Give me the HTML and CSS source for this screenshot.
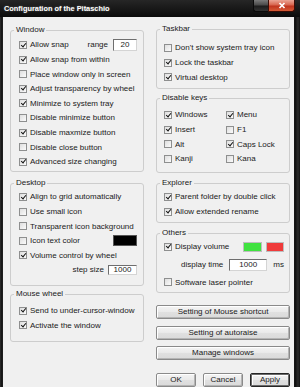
FILE: index.html
```html
<!DOCTYPE html>
<html>
<head>
<meta charset="utf-8">
<link rel="stylesheet" href="styles.css">
</head>
<body>
<div class="window">
  <div class="titlebar">
    <span class="title">Configuration of the Pitaschio</span>
    <div class="capbtns">
      <span class="cap-min"></span>
      <span class="cap-close"><svg width="8" height="7" viewBox="0 0 8 7"><path d="M1.5 1 L6.5 6 M6.5 1 L1.5 6" stroke="#fff" stroke-width="1.7" fill="none"/></svg></span>
    </div>
  </div>
  <div class="client">
    <div class="col">
      <section class="group g-window">
        <div class="legend">Window</div>
        <div class="rows">
          <div class="row"><span class="cb on"></span><span>Allow snap</span><span class="push">range</span><span class="field f-range">20</span></div>
          <div class="row"><span class="cb on"></span><span>Allow snap from within</span></div>
          <div class="row"><span class="cb"></span><span>Place window only in screen</span></div>
          <div class="row"><span class="cb on"></span><span>Adjust transparency by wheel</span></div>
          <div class="row"><span class="cb on"></span><span>Minimize to system tray</span></div>
          <div class="row"><span class="cb"></span><span>Disable minimize button</span></div>
          <div class="row"><span class="cb on"></span><span>Disable maxmize button</span></div>
          <div class="row"><span class="cb"></span><span>Disable close button</span></div>
          <div class="row"><span class="cb on"></span><span>Advanced size changing</span></div>
        </div>
      </section>
      <section class="group g-desktop">
        <div class="legend">Desktop</div>
        <div class="rows">
          <div class="row"><span class="cb on"></span><span>Align to grid automatically</span></div>
          <div class="row"><span class="cb"></span><span>Use small icon</span></div>
          <div class="row"><span class="cb"></span><span>Transparent icon background</span></div>
          <div class="row"><span class="cb"></span><span>Icon text color</span><span class="swatch sw-black"></span></div>
          <div class="row"><span class="cb on"></span><span>Volume control by wheel</span></div>
          <div class="row row-end"><span>step size</span><span class="field f-step">1000</span></div>
        </div>
      </section>
      <section class="group g-mouse">
        <div class="legend">Mouse wheel</div>
        <div class="rows">
          <div class="row"><span class="cb on"></span><span>Send to under-cursor-window</span></div>
          <div class="row"><span class="cb on"></span><span>Activate the window</span></div>
        </div>
      </section>
    </div>
    <div class="col">
      <section class="group g-taskbar">
        <div class="legend">Taskbar</div>
        <div class="rows">
          <div class="row"><span class="cb"></span><span>Don't show system tray icon</span></div>
          <div class="row"><span class="cb on"></span><span>Lock the taskbar</span></div>
          <div class="row"><span class="cb on"></span><span>Virtual desktop</span></div>
        </div>
      </section>
      <section class="group g-keys">
        <div class="legend">Disable keys</div>
        <div class="rows keys">
          <div class="row"><span class="cb on"></span><span>Windows</span></div>
          <div class="row"><span class="cb on"></span><span>Menu</span></div>
          <div class="row"><span class="cb on"></span><span>Insert</span></div>
          <div class="row"><span class="cb"></span><span>F1</span></div>
          <div class="row"><span class="cb"></span><span>Alt</span></div>
          <div class="row"><span class="cb on"></span><span>Caps Lock</span></div>
          <div class="row"><span class="cb"></span><span>Kanji</span></div>
          <div class="row"><span class="cb"></span><span>Kana</span></div>
        </div>
      </section>
      <section class="group g-explorer">
        <div class="legend">Explorer</div>
        <div class="rows">
          <div class="row"><span class="cb on"></span><span>Parent folder by double click</span></div>
          <div class="row"><span class="cb on"></span><span>Allow extended rename</span></div>
        </div>
      </section>
      <section class="group g-others">
        <div class="legend">Others</div>
        <div class="rows">
          <div class="row"><span class="cb on"></span><span>Display volume</span><span class="swatch sw-green"></span><span class="swatch sw-red"></span></div>
          <div class="row row-time"><span>display time</span><span class="field f-time">1000</span><span class="ms">ms</span></div>
          <div class="row"><span class="cb"></span><span>Software laser pointer</span></div>
        </div>
      </section>
      <div class="btn btn-wide b1">Setting of Mouse shortcut</div>
      <div class="btn btn-wide b2">Setting of autoraise</div>
      <div class="btn btn-wide b3">Manage windows</div>
      <div class="btnrow">
        <div class="btn">OK</div>
        <div class="btn">Cancel</div>
        <div class="btn btn-default">Apply</div>
      </div>
    </div>
  </div>
</div>
</body>
</html>
```

FILE: styles.css
```css
* { box-sizing: border-box; }
html, body { margin: 0; padding: 0; }
body {
  width: 300px;
  height: 387px;
  overflow: hidden;
  font-family: "Liberation Sans", Arial, sans-serif;
  font-size: 8px;
  color: #1a1a1a;
  background: #161616;
}
.window {
  width: 300px;
  height: 387px;
  display: flex;
  flex-direction: column;
  background: linear-gradient(90deg, #3c3c3c 0, #101010 1px, #1d1d1d 2px, #1d1d1d 294px, #0c0c0c 295px, #2a2a2a 298px, #111 300px);
}
.titlebar {
  height: 17px;
  flex: none;
  display: flex;
  align-items: flex-start;
  background: linear-gradient(#262626, #0b0b0b);
}
.title {
  padding-left: 4px;
  line-height: 18px;
  color: #fff;
  font-weight: bold;
  font-size: 7.4px;
  text-shadow: 0 0 2px rgba(255,255,255,0.35);
}
.capbtns {
  margin-left: auto;
  margin-right: 5px;
  display: flex;
  height: 12px;
}
.cap-min {
  width: 15px;
  height: 12px;
  border: 1px solid #0a0a0a;
  border-top: 0;
  border-right: 0;
  border-radius: 0 0 0 3px;
  background: linear-gradient(#7a7a7a, #4a4a4a 45%, #1c1c1c 55%, #333);
}
.cap-close {
  width: 27px;
  height: 12px;
  border: 1px solid #3a0d06;
  border-top: 0;
  border-radius: 0 0 3px 0;
  background: linear-gradient(#eba595, #d8664f 45%, #c0341e 55%, #d65a36);
  display: flex;
  align-items: center;
  justify-content: center;
}
.client {
  flex: 1;
  margin: 0 6px 0 3px;
  background: #f0f0f0;
  display: grid;
  grid-template-columns: 134px 134px;
  column-gap: 12px;
  align-items: start;
  padding: 7px 0 0 7px;
}
.col { display: flex; flex-direction: column; }
.group {
  border: 1px solid #cdcdcd;
  border-radius: 3px;
}
.legend {
  width: fit-content;
  height: 10px;
  line-height: 10px;
  margin: -6px 0 0 3px;
  padding: 0 2px;
  background: #f0f0f0;
  color: #1a1a1a;
}
.rows { display: flex; flex-direction: column; }
.row {
  height: 14.6px;
  display: flex;
  align-items: center;
  white-space: nowrap;
}
.cb {
  width: 8px;
  height: 8px;
  flex: none;
  border: 1px solid #8e8f8f;
  background: linear-gradient(135deg, #dedede, #fbfbfb);
  margin-right: 3px;
  position: relative;
}
.cb.on::after {
  content: "";
  position: absolute;
  left: 1.6px;
  top: -0.4px;
  width: 2px;
  height: 4.2px;
  border: solid #111;
  border-width: 0 1.6px 1.6px 0;
  transform: rotate(40deg);
}
.push { margin-left: auto; }
.field {
  background: #fff;
  border: 1px solid;
  border-color: #6e6e6e #d4d4d4 #d4d4d4 #6e6e6e;
  text-align: center;
  flex: none;
}
.f-range { width: 24px; height: 12px; line-height: 10px; margin-left: 5px; }
.f-step { width: 29px; height: 10px; line-height: 8px; margin-left: 4px; }
.f-time { width: 38px; height: 12px; line-height: 10px; margin-left: 6px; }
.ms { margin-left: 6px; }
.row-end { justify-content: flex-end; }
.swatch { flex: none; border: 1px solid #bdbdbd; }
.sw-black { width: 24px; height: 11px; background: #000; margin-left: auto; border-color: #555; }
.sw-green { width: 19px; height: 10px; background: #3fe23f; margin-left: auto; }
.sw-red { width: 18px; height: 10px; background: #ef3b3b; margin-left: 4px; }
.row-time { height: 20.7px; padding-left: 17px; }

.g-window { margin-top: 6px; }
.g-window .rows { padding: 2.7px 6px 1.9px 8px; }
.g-desktop { margin-top: 11px; }
.g-desktop .rows { padding: 1.7px 6px 7.7px 8px; }
.g-mouse { margin-top: 8px; }
.g-mouse .rows { padding: 4.7px 6px 8.1px 8px; }
.g-taskbar { margin-top: 5px; }
.g-taskbar .rows { padding: 6.7px 4px 3.5px 7px; }
.g-keys { margin-top: 9px; }
.g-keys .rows { padding: 4.7px 4px 5.9px 7px; }
.keys { display: grid; grid-template-columns: 62px auto; }
.g-explorer { margin-top: 10px; }
.g-explorer .rows { padding: 1.7px 4px 3.1px 7px; }
.g-others { margin-top: 10px; }
.g-others .rows { padding: 1.7px 5px 2.4px 7px; }

.btn {
  height: 14px;
  line-height: 12px;
  text-align: center;
  border: 1px solid #8a8a8a;
  border-radius: 2px;
  background: linear-gradient(#f4f4f4, #e9e9e9 50%, #e0e0e0 51%, #dadada);
  box-shadow: inset 1px 1px #fff, inset -1px -1px #b4b4b4;
  color: #1a1a1a;
}
.btn-wide { width: 134px; }
.b1 { margin-top: 12px; }
.b2 { margin-top: 7px; }
.b3 { margin-top: 6px; }
.btnrow {
  margin-top: 13px;
  display: flex;
  justify-content: space-between;
  width: 134px;
}
.btnrow .btn { width: 40px; }
.btn-default {
  border-color: #262626;
  box-shadow: inset 0 0 0 1px #6a6a6a, inset 2px 2px #fff;
}
```
